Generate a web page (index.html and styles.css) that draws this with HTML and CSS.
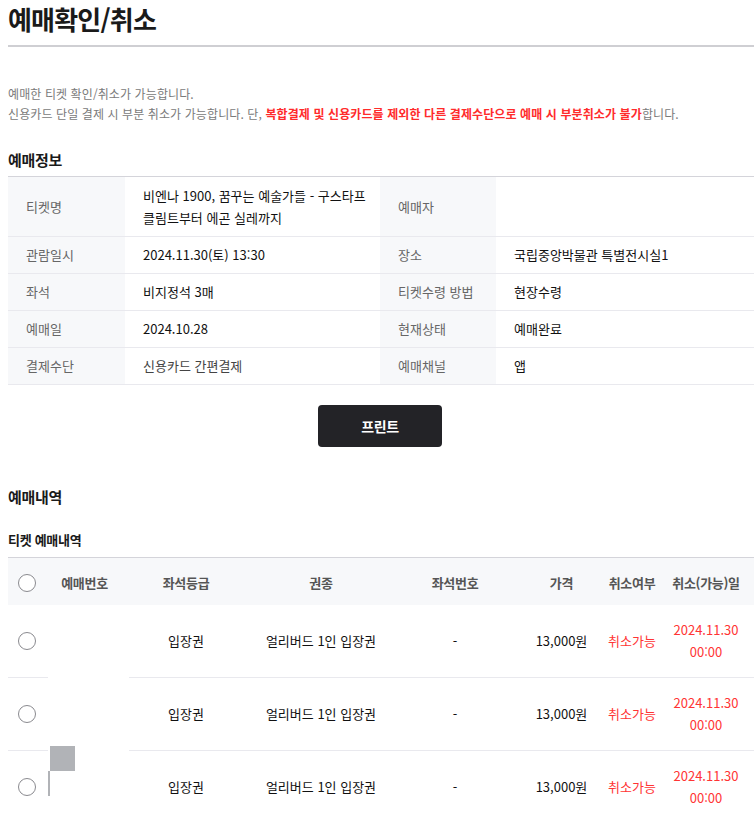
FILE: index.html
```html
<!DOCTYPE html>
<html lang="ko">
<head>
<meta charset="utf-8">
<title>예매확인/취소</title>
<link rel="stylesheet" href="styles.css">
</head>
<body>
<div class="page">
  <h1 class="page-title">예매확인/취소</h1>

  <div class="notice">
    <p>예매한 티켓 확인/취소가 가능합니다.</p>
    <p>신용카드 단일 결제 시 부분 취소가 가능합니다. 단, <strong class="warn">복합결제 및 신용카드를 제외한 다른 결제수단으로 예매 시 부분취소가 불가</strong>합니다.</p>
  </div>

  <h2 class="sec-title">예매정보</h2>
  <table class="info">
    <colgroup>
      <col class="c-label"><col class="c-val1"><col class="c-label2"><col>
    </colgroup>
    <tr>
      <th>티켓명</th>
      <td>비엔나 1900, 꿈꾸는 예술가들 - 구스타프 클림트부터 에곤 실레까지</td>
      <th>예매자</th>
      <td></td>
    </tr>
    <tr>
      <th>관람일시</th>
      <td>2024.11.30(토) 13:30</td>
      <th>장소</th>
      <td>국립중앙박물관 특별전시실1</td>
    </tr>
    <tr>
      <th>좌석</th>
      <td>비지정석 3매</td>
      <th>티켓수령 방법</th>
      <td>현장수령</td>
    </tr>
    <tr>
      <th>예매일</th>
      <td>2024.10.28</td>
      <th>현재상태</th>
      <td>예매완료</td>
    </tr>
    <tr>
      <th>결제수단</th>
      <td class="muted">신용카드 간편결제</td>
      <th>예매채널</th>
      <td>앱</td>
    </tr>
  </table>

  <div class="btn-row">
    <button class="btn-print" type="button">프린트</button>
  </div>

  <h2 class="sec-title big">예매내역</h2>
  <h3 class="sub-title">티켓 예매내역</h3>

  <table class="list">
    <colgroup>
      <col class="w-radio"><col class="w-no"><col class="w-grade"><col class="w-kind"><col class="w-seat"><col class="w-price"><col class="w-state"><col>
    </colgroup>
    <thead>
      <tr>
        <th><input class="radio" type="radio" name="all"></th>
        <th class="h-no">예매번호</th>
        <th>좌석등급</th>
        <th>권종</th>
        <th>좌석번호</th>
        <th class="price">가격</th>
        <th>취소여부</th>
        <th>취소(가능)일</th>
      </tr>
    </thead>
    <tbody>
      <tr>
        <td><input class="radio" type="radio" name="t"></td>
        <td class="no"></td>
        <td>입장권</td>
        <td>얼리버드 1인 입장권</td>
        <td>-</td>
        <td class="price">13,000원</td>
        <td class="red">취소가능</td>
        <td class="red">2024.11.30<br>00:00</td>
      </tr>
      <tr>
        <td><input class="radio" type="radio" name="t"></td>
        <td class="no"></td>
        <td>입장권</td>
        <td>얼리버드 1인 입장권</td>
        <td>-</td>
        <td class="price">13,000원</td>
        <td class="red">취소가능</td>
        <td class="red">2024.11.30<br>00:00</td>
      </tr>
      <tr>
        <td><input class="radio" type="radio" name="t"></td>
        <td class="no"><span class="flag"><span class="flag-box"></span><span class="flag-pole"></span></span></td>
        <td>입장권</td>
        <td>얼리버드 1인 입장권</td>
        <td>-</td>
        <td class="price">13,000원</td>
        <td class="red">취소가능</td>
        <td class="red">2024.11.30<br>00:00</td>
      </tr>
    </tbody>
  </table>
</div>
</body>
</html>
```

FILE: styles.css
```css
html, body {
  margin: 0;
  padding: 0;
  overflow: hidden;
  background: #fff;
}

body {
  font-family: "Noto Sans CJK KR", "Noto Sans", sans-serif;
  color: #222;
  font-size: 13px;
}

.page {
  padding: 0 0 0 8px;
}

.page-title {
  margin: 0;
  padding: 0 0 7px;
  font-size: 26px;
  line-height: 38px;
  font-weight: 700;
  color: #1a1a1a;
  letter-spacing: -0.8px;
  border-bottom: 2px solid #cfcfd3;
}

.notice {
  margin-top: 37px;
  color: #7a7a7a;
  font-size: 12px;
  line-height: 20px;
  letter-spacing: 0.1px;
}

.notice p {
  margin: 0;
}

.warn {
  color: #ff2b2b;
  font-weight: 700;
}

.sec-title {
  margin: 26px 0 6px;
  font-size: 15px;
  line-height: 20px;
  font-weight: 700;
  color: #1a1a1a;
  letter-spacing: -0.3px;
}

.info {
  width: 100%;
  border-collapse: collapse;
  border-top: 1px solid #d4d4da;
  table-layout: fixed;
}

.c-label { width: 117px; }
.c-val1 { width: 255px; }
.c-label2 { width: 116px; }

.info th,
.info td {
  border-bottom: 1px solid #e9e9ee;
  padding: 7px 10px 7px 18px;
  line-height: 22px;
  text-align: left;
  vertical-align: middle;
}

.info tr:first-child th,
.info tr:first-child td {
  padding-top: 8px;
  padding-bottom: 7px;
}

.info th {
  background: #f7f8fa;
  font-weight: 400;
  color: #666;
}

.info td {
  color: #111;
  font-weight: 400;
}

.info td.muted {
  color: #444;
}

.btn-row {
  display: flex;
  justify-content: center;
  margin-top: 20px;
}

.btn-print {
  width: 124px;
  height: 42px;
  border: 0;
  border-radius: 4px;
  background: #232327;
  color: #fff;
  font-family: inherit;
  font-size: 14px;
  font-weight: 700;
  letter-spacing: -0.3px;
  margin-right: 2px;
}

.sec-title.big {
  margin: 39px 0 0;
  line-height: 22px;
}

.sub-title {
  margin: 22px 0 7px;
  font-size: 13px;
  line-height: 20px;
  font-weight: 700;
  color: #1a1a1a;
  letter-spacing: -0.3px;
}

.list {
  width: 100%;
  table-layout: fixed;
  border-collapse: separate;
  border-spacing: 0;
  border-top: 1px solid #d4d4da;
}

.w-radio { width: 40px; }
.w-no { width: 81px; }
.w-grade { width: 114px; }
.w-kind { width: 156px; }
.w-seat { width: 112px; }
.w-price { width: 95px; }
.w-state { width: 52px; }

.list th {
  background: #f7f8fa;
  height: 47px;
  padding: 2px 0 0;
  box-sizing: border-box;
  font-weight: 700;
  color: #555;
  text-align: center;
  white-space: nowrap;
  letter-spacing: -0.3px;
}

.list th.h-no {
  padding-right: 8px;
}

.list .price {
  padding-left: 6px;
}

.list td {
  padding: 14px 0;
  line-height: 22px;
  text-align: center;
  white-space: nowrap;
  border-bottom: 1px solid #e9e9ee;
  color: #111;
}

.list td.price {
  padding-left: 6px;
}

.list td.no {
  border-bottom-color: #fff;
  position: relative;
}

.list td.red {
  color: #ff3434;
}

.radio {
  appearance: none;
  -webkit-appearance: none;
  display: block;
  width: 18px;
  height: 18px;
  margin: 0 0 0 10px;
  border: 1px solid #8a8a8f;
  border-radius: 50%;
  background: #fff;
  box-sizing: border-box;
}

.flag {
  position: absolute;
  left: 0;
  top: -5px;
}

.flag-box {
  position: absolute;
  left: 2px;
  top: 0;
  width: 25px;
  height: 25px;
  background: #b1b3b7;
}

.flag-pole {
  position: absolute;
  left: 0;
  top: 25px;
  width: 2px;
  height: 25px;
  background: #b1b3b7;
}
```
